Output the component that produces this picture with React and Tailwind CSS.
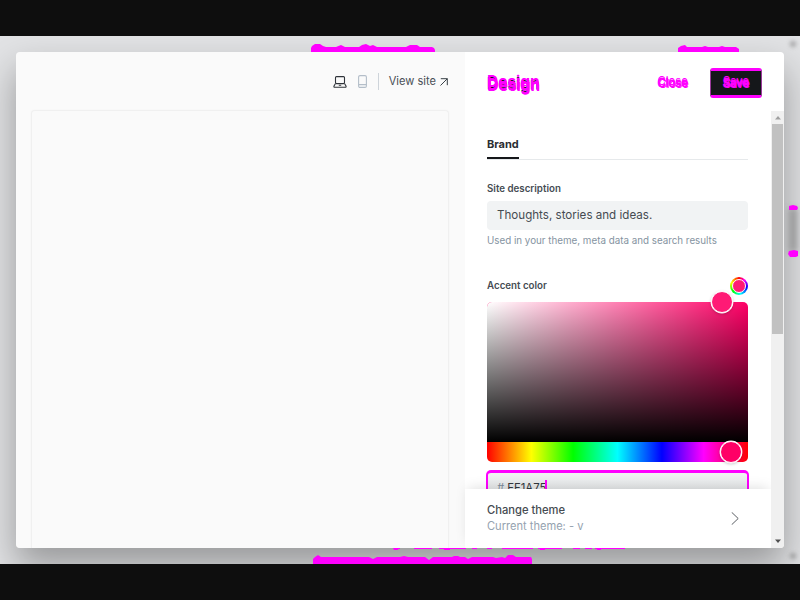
import React from "react";

const MAG = "#ff00ff";

function Laptop() {
  return (
    <svg width="14" height="12" viewBox="0 0 14 12" fill="none" stroke="#30343a" strokeWidth="1.1" strokeLinejoin="round">
      <rect x="2.5" y="0.6" width="9" height="7" rx="1" />
      <path d="M2.5 7.4 1 10c-.3.7 0 1.2.7 1.2h10.6c.7 0 1-.5.7-1.2l-1.5-2.6M5.8 9.2h2.4" />
    </svg>
  );
}

function Phone() {
  return (
    <svg width="9" height="13" viewBox="0 0 9 13" fill="none" stroke="#b4bec9" strokeWidth="1.1">
      <rect x=".6" y=".6" width="7.8" height="11.8" rx="1.4" />
      <path d="M.6 9.6h7.8" />
    </svg>
  );
}

function Preview() {
  return (
    <section className="flex w-[449px] flex-col bg-[#fafafa]">
      <div className="flex h-[58px] shrink-0 items-center justify-end pt-px pr-[17px]">
        <Laptop />
        <span className="ml-[11px]"><Phone /></span>
        <span className="ml-[11px] h-[17px] w-px bg-[#ced4da]" />
        <span className="ml-[10px] text-[11.1px] text-[#4a5057]">View site</span>
        <svg className="ml-[4px]" width="8" height="8" viewBox="0 0 8 8" fill="none" stroke="#394047" strokeWidth="1">
          <path d="M.5 7.5 7.3.7M.8.7h6.5v6.5" />
        </svg>
      </div>
      <div className="mr-4 ml-[15px] flex-1 rounded-t-[4px] border border-b-0 border-[#f0f0f0] bg-[#fafafa] shadow-[0_0_2px_rgba(0,0,0,0.04)]" />
    </section>
  );
}

function Picker() {
  return (
    <div className="relative mt-[6px] h-[160px]">
      <div className="flex h-full flex-col overflow-hidden rounded-[5px]">
        <div className="h-[140px] bg-[#ff0066] bg-[linear-gradient(to_top,#000,rgba(0,0,0,0)),linear-gradient(to_right,#fff,rgba(255,255,255,0))]" />
        <div className="flex-1 bg-[linear-gradient(to_right,#f00_0%,#ff0_17%,#0f0_33%,#0ff_50%,#00f_67%,#f0f_83%,#f00_100%)]" />
      </div>
      <span className="absolute -top-[11px] left-[224px] size-[22px] rounded-full border-[1.5px] border-white bg-[#ff1a75] shadow-[0_0_0_0.4px_#fff,0_1px_3px_rgba(0,0,0,0.25)]" />
      <span className="absolute top-[139px] left-[233px] size-[22px] rounded-full border-[1.5px] border-white bg-[#ff0066] shadow-[0_0_0_0.4px_#fff,0_1px_3px_rgba(0,0,0,0.25)]" />
    </div>
  );
}

function Scrollbar() {
  return (
    <div className="flex w-[13px] flex-col items-center bg-[#f0f0f0]">
      <div className="flex h-[13px] items-center">
        <svg width="6" height="4" viewBox="0 0 6 4"><path d="M3 0 6 3.5H0z" fill="#a0a0a0" /></svg>
      </div>
      <div className="h-[210px] w-[11px] bg-[#c1c1c1]" />
      <div className="mt-auto flex h-[15px] items-center">
        <svg width="6" height="4" viewBox="0 0 6 4"><path d="M3 4 6 .5H0z" fill="#505050" /></svg>
      </div>
    </div>
  );
}

function Sidebar() {
  return (
    <aside className="flex min-w-0 flex-1 flex-col bg-white">
      <header className="flex h-[59px] shrink-0 items-center pt-[2px] pr-[22px] pl-[22px]">
        <h1 className="-mt-px text-[15.5px] leading-5 font-bold text-[#ff00ff] [text-shadow:0_3px_0_#ff00ff,0.5px_4px_0_#ff00ff,0_2px_0_#15171a]">Design</h1>
        <button className="ml-auto text-[11.4px] leading-4 text-[#ff00ff] [-webkit-text-stroke:0.8px_#ff00ff] [text-shadow:1px_1px_0_#ff00ff,0_-2px_0_#ff00ff]">Close</button>
        <button className="ml-[22px] flex h-[30px] w-[52px] items-center justify-center rounded-[3px] border-x border-y-[3px] border-x-[#9a3a9a] border-y-[#ff00ff] bg-[#15171a] text-[11.2px] leading-4 text-[#ff00ff] [-webkit-text-stroke:1.1px_#ff00ff] [text-shadow:1px_1px_0_#ff00ff,0_-2px_0_#ff00ff]">
          Save
        </button>
      </header>
      <div className="flex min-h-0 flex-1">
        <div className="flex min-w-0 flex-1 flex-col">
          <div className="h-[378px] overflow-hidden pt-[26px] pr-[23px] pl-[22px]">
            <div className="flex h-[23px] border-b border-[#e6e9eb]">
              <span className="h-[22px] border-b-2 border-[#15171a] text-[11px] leading-[15px] font-bold text-[#2b2e32]">Brand</span>
            </div>
            <div className="mt-[21px] h-[20px] text-[9.75px] leading-[15px] font-semibold text-[#454c53]">Site description</div>
            <div className="flex h-[29px] items-center rounded-[4px] bg-[#f1f3f4] px-[10px] pt-px text-[11.6px] text-[#454b51]">Thoughts, stories and ideas.</div>
            <p className="mt-[4px] text-[9.8px] leading-[14px] whitespace-nowrap text-[#8593a1]">Used in your theme, meta data and search results</p>
            <div className="mt-[28px] flex h-5 items-center justify-between">
              <span className="pt-px text-[9.75px] font-semibold text-[#454c53]">Accent color</span>
              <span className="flex size-[18px] items-center justify-center rounded-full bg-[conic-gradient(#f00,#f0f_12%,#00f_28%,#0ff_47%,#0f0_64%,#ff0_82%,#f00)]">
                <span className="size-[14px] rounded-full border border-white bg-[#ff1a75]" />
              </span>
            </div>
            <Picker />
            <div className="-mx-px mt-[8px] flex h-[34px] rounded-[5px] border-x-2 border-t-[3px] border-[#ff00ff] bg-[linear-gradient(to_bottom,#f1f3f4,#e2e4e5_18px)] px-[9px] pt-[7px] text-[11.4px] leading-[16px] text-[#33373c]">
              <span className="mr-[3px] text-[#7c8b9a]">#</span>
              <span>FF1A75</span>
              <span className="-ml-px h-4 w-[2px] bg-[#ff00ff]" />
            </div>
          </div>
          <footer className="flex flex-1 items-center justify-between bg-white pr-[32px] pl-[22px] shadow-[0_-4px_12px_-3px_rgba(0,0,0,0.13)]">
            <div>
              <div className="text-[11.2px] leading-[16px] font-medium text-[#454b51]">Change theme</div>
              <div className="text-[11.1px] leading-[17px] text-[#95a2af]">Current theme: - v</div>
            </div>
            <svg width="8" height="13" viewBox="0 0 8 13" fill="none" stroke="#5a5e63" strokeWidth="1"><path d="m.7.3 6.5 6.2-6.5 6.2" /></svg>
          </footer>
        </div>
        <Scrollbar />
      </div>
    </aside>
  );
}

export default function App() {
  return (
    <div className="h-[600px] w-[800px] overflow-hidden bg-[#0e0e0e] py-9 font-['Inter',sans-serif]">
      <div className="relative h-[528px] overflow-hidden bg-[#e1e2e4] p-4">
        <main className="flex h-[496px] rounded-[4px] shadow-[0_18px_36px_rgba(0,0,0,0.33)]">
          <div className="relative z-10 flex flex-1 overflow-hidden rounded-[4px]">
            <Preview />
            <Sidebar />
          </div>
        </main>
        <svg className="absolute inset-0" width="800" height="528" fill={MAG}>
          <path d="M311 16v-4l1-2 3-2h5l3 2 3 1h10l5-2 4 2h14l3-2 4-1 4 2 3-1 4 2H406l4-2h7l3 2h12l2 1 1 2v2z" />
          <path d="M678 16v-4l3-2 4-1 2 2h15l3-1 3 1h11l3-1 3 1h11l3 2v3z" />
          <path d="M313 528v-5l2-2 3-2 3 2h48l4 2 4-2h23l4-1 4 1h17l4 3 4-3h19l2-1h4l2 1h5l3 2 4-2h21l3 1 6-1 3 1 3-3h5l3 2h10l2 1v6z" />
          <path d="M393 512h7v1h-2v1h-4zM414 512h18v1h-18zM439 512h27v1h-16v1h-6v-1h-5zM472 512h5v1h-5zM487 512h5v1h-5zM502 512h31v1h-31zM538 512h24v1h-17v1h-5v-1h-2zM573 512h7v1h-7zM585 512h7v1h-7zM595 512h30v1h-24v1h-4v-1h-2z" />
          <path d="M524 521h7l1 2v5h-8z" />
        </svg>
        <span className="absolute top-[172px] left-[789px] h-[44px] w-2 bg-[#777] opacity-60 blur-[3px]" />
        <span className="absolute top-[5px] left-[790px] size-[6px] rounded-full bg-[#777] opacity-60 blur-[2px]" />
        <span className="absolute top-[517px] left-[790px] size-[6px] rounded-full bg-[#777] opacity-60 blur-[2px]" />
        <svg className="absolute inset-0" width="800" height="528" fill={MAG}>
          <path d="M789 170l4-1 4 1 1 2-1 2h-8zM789 215l5-1 4 1v5l-2 1h-6l-2-3z" />
        </svg>
      </div>
    </div>
  );
}
